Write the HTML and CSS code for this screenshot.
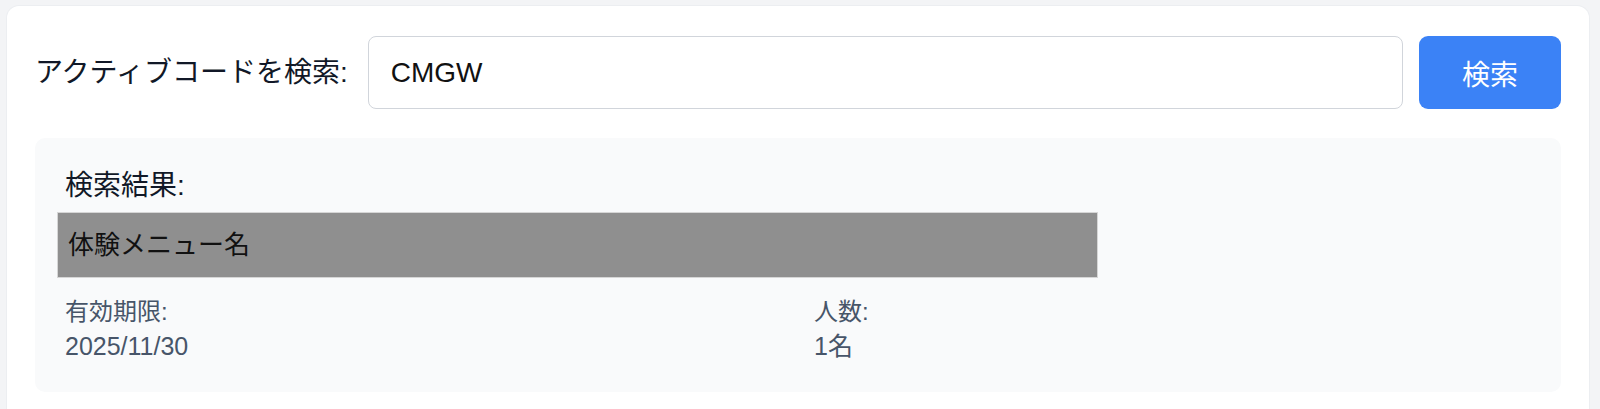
FILE: index.html
```html
<!DOCTYPE html>
<html>
	<head>
		<meta charset="utf-8">
		<title>アクティブコード検索</title>
		<link rel="stylesheet" href="styles.css">
	</head>
	<body>
		<div class="card">
			<form class="search" onsubmit="return false;">
				<label class="search-label" for="code">アクティブコードを検索:</label>
				<input class="search-input" id="code" type="text" value="CMGW">
				<button class="search-btn" type="submit">検索</button>
			</form>
			<div class="result">
				<h2 class="result-title">検索結果:</h2>
				<div class="menu-name">体験メニュー名</div>
				<div class="details">
					<div class="detail">
						<div class="detail-label">有効期限:</div>
						<div class="detail-value">2025/11/30</div>
					</div>
					<div class="detail">
						<div class="detail-label">人数:</div>
						<div class="detail-value">1名</div>
					</div>
				</div>
			</div>
		</div>
	</body>
</html>
```

FILE: styles.css
```css
* {margin:0; padding:0; box-sizing:border-box;}
body{
	background:#f3f4f6;
	padding:6px 11px 0 7px;
	font-family:"Liberation Sans","Noto Sans CJK JP",sans-serif;
	color:#111827;
}
.card{
	background:#fff;
	border-radius:12px;
	padding:30px 28px 40px;
	box-shadow:0 0 0 1px #eceef1;
}
.search{
	display:flex;
	align-items:center;
	gap:16px;
}
.search-label{
	font-size:28px;
	line-height:40px;
	white-space:nowrap;
	margin-right:4px;
}
.search-input{
	flex:1;
	height:73px;
	border:1px solid #d1d5db;
	border-radius:8px;
	padding:0 22px;
	font-size:28px;
	font-family:inherit;
	color:#111;
	outline:none;
}
.search-btn{
	width:142px;
	height:73px;
	border:none;
	border-radius:9px;
	background:#3b82f6;
	color:#fff;
	font-size:28px;
	font-family:inherit;
	cursor:pointer;
}
.result{
	margin-top:29px;
	background:#f9fafb;
	border-radius:10px;
	padding:28px 22px 28px;
}
.result-title{
	font-size:28px;
	font-weight:normal;
	line-height:40px;
	padding-left:8px;
	margin-bottom:6px;
}
.menu-name{
	width:1041px;
	height:66px;
	line-height:64px;
	background:#8f8f8f;
	border:1px solid #d6d6d6;
	padding:0 10px;
	font-size:26px;
	color:#111;
}
.details{
	margin-top:16px;
	padding:0 8px;
	display:grid;
	grid-template-columns:1fr 1fr;
	gap:32px;
	color:#475569;
	font-size:24px;
	line-height:35px;
}
.detail-value{
	font-size:25px;
}
```
